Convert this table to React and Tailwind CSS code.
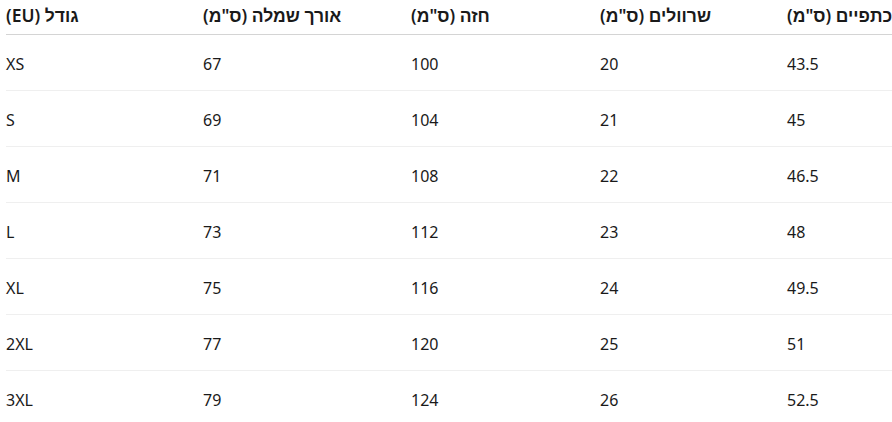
const headers = ['גודל (EU)', 'אורך שמלה (ס"מ)', 'חזה (ס"מ)', 'שרוולים (ס"מ)', 'כתפיים (ס"מ)'];

const rows = [
  ['XS', '67', '100', '20', '43.5'],
  ['S', '69', '104', '21', '45'],
  ['M', '71', '108', '22', '46.5'],
  ['L', '73', '112', '23', '48'],
  ['XL', '75', '116', '24', '49.5'],
  ['2XL', '77', '120', '25', '51'],
  ['3XL', '79', '124', '26', '52.5'],
];

const widths = ['w-[197px]', 'w-[208px]', 'w-[189px]', 'w-[187px]', 'w-[200px]'];

export default function App() {
  return (
    <div className="w-[892px] h-[422px] overflow-hidden bg-white pl-[6px] font-['Noto_Sans','Liberation_Sans',sans-serif] text-[16px] text-[#1a1a1a]">
      <table className="border-collapse table-fixed w-[981px]">
        <thead>
          <tr className="h-[34px] border-b border-[#d4d4d4]">
            {headers.map((h, i) => (
              <th key={i} dir="rtl" className={`${widths[i]} p-0 text-left align-middle text-[17.5px] font-semibold whitespace-nowrap pb-[4px]`}>
                {h}
              </th>
            ))}
          </tr>
        </thead>
        <tbody>
          {rows.map((r, ri) => (
            <tr key={ri} className="h-[56px] border-b border-[#efefef]">
              {r.map((c, ci) => (
                <td key={ci} className="p-0 pt-[3px] text-left align-middle">{c}</td>
              ))}
            </tr>
          ))}
        </tbody>
      </table>
    </div>
  );
}
